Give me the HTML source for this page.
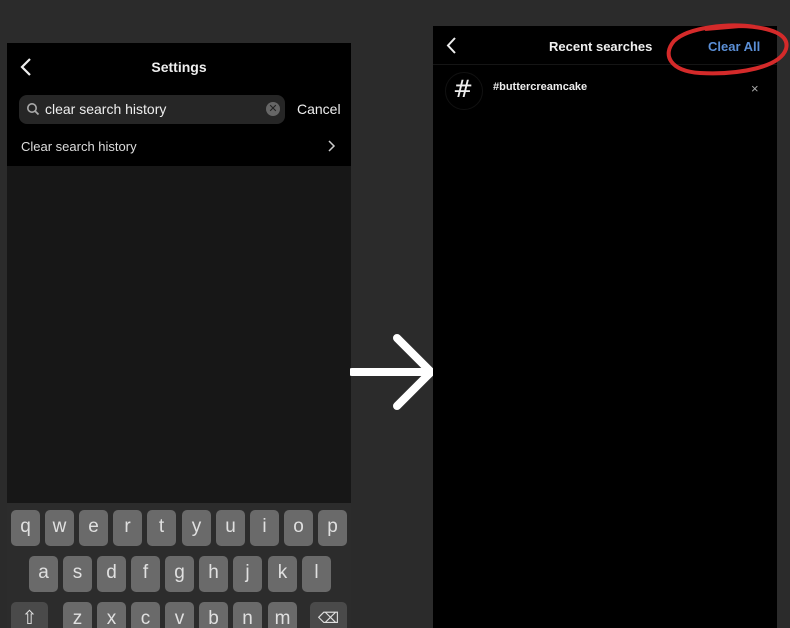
<!DOCTYPE html><html><head><style>
html,body{margin:0;width:790px;height:628px;overflow:hidden}
body{background:#2b2b2b;position:relative;font-family:"Liberation Sans",sans-serif;color:#eee}
.a{position:absolute}
.k{position:absolute;width:29px;height:36px;background:#6a6a6a;border-radius:5px;color:#e0e0e0;font-size:19px;text-align:center;line-height:34px}
</style></head><body>
<div class="a" style="left:7px;top:43px;width:344px;height:585px;background:#171717"></div>
<div class="a" style="left:7px;top:43px;width:344px;height:123px;background:#000"></div>
<svg class="a" style="left:18px;top:56px" width="16" height="22"><path d="M12 3 L4 11 L12 19" stroke="#eee" stroke-width="2.2" fill="none"/></svg>
<div class="a" style="left:7px;width:344px;top:59px;text-align:center;font-weight:bold;font-size:14px">Settings</div>
<div class="a" style="left:19px;top:95px;width:266px;height:29px;background:#262626;border-radius:8px"></div>
<svg class="a" style="left:26px;top:102px" width="14" height="14"><circle cx="6" cy="6" r="4.2" stroke="#aaa" stroke-width="1.6" fill="none"/><path d="M9 9 L12.5 12.5" stroke="#aaa" stroke-width="1.8"/></svg>
<div class="a" style="left:45px;top:101px;font-size:14px">clear search history</div>
<div class="a" style="left:266px;top:102px;width:14px;height:14px;border-radius:50%;background:#666;color:#222;font-size:11px;line-height:14px;text-align:center">✕</div>
<div class="a" style="left:297px;top:101px;font-size:14px">Cancel</div>
<div class="a" style="left:21px;top:139px;font-size:13px;color:#ddd">Clear search history</div>
<svg class="a" style="left:326px;top:139px" width="10" height="14"><path d="M3 2 L8 7 L3 12" stroke="#ccc" stroke-width="1.5" fill="none"/></svg>
<div class="a" style="left:7px;top:503px;width:344px;height:125px;background:#2c2c2c"></div>
<div class="k" style="left:11px;top:510px">q</div><div class="k" style="left:45px;top:510px">w</div><div class="k" style="left:79px;top:510px">e</div><div class="k" style="left:113px;top:510px">r</div><div class="k" style="left:147px;top:510px">t</div><div class="k" style="left:182px;top:510px">y</div><div class="k" style="left:216px;top:510px">u</div><div class="k" style="left:250px;top:510px">i</div><div class="k" style="left:284px;top:510px">o</div><div class="k" style="left:318px;top:510px">p</div>
<div class="k" style="left:29px;top:556px">a</div><div class="k" style="left:63px;top:556px">s</div><div class="k" style="left:97px;top:556px">d</div><div class="k" style="left:131px;top:556px">f</div><div class="k" style="left:165px;top:556px">g</div><div class="k" style="left:199px;top:556px">h</div><div class="k" style="left:233px;top:556px">j</div><div class="k" style="left:268px;top:556px">k</div><div class="k" style="left:302px;top:556px">l</div>
<div class="k" style="left:11px;top:602px;width:37px;background:#4a4a4a">⇧</div>
<div class="k" style="left:63px;top:602px">z</div><div class="k" style="left:97px;top:602px">x</div><div class="k" style="left:131px;top:602px">c</div><div class="k" style="left:165px;top:602px">v</div><div class="k" style="left:199px;top:602px">b</div><div class="k" style="left:233px;top:602px">n</div><div class="k" style="left:268px;top:602px">m</div>
<div class="k" style="left:310px;top:602px;width:37px;background:#4a4a4a;font-size:15px">⌫</div>
<svg class="a" style="left:350px;top:330px" width="90" height="85"><path d="M2 42 L80 42 M47 8 L81 42 L47 76" stroke="#fff" stroke-width="8" fill="none" stroke-linecap="round" stroke-linejoin="round"/></svg>
<div class="a" style="left:433px;top:26px;width:344px;height:602px;background:#000"></div>
<div class="a" style="left:433px;top:64px;width:344px;height:1px;background:#151515"></div>
<svg class="a" style="left:444px;top:36px" width="16" height="20"><path d="M11 2 L4 9.5 L11 17" stroke="#eee" stroke-width="2" fill="none"/></svg>
<div class="a" style="left:549px;top:39px;font-weight:bold;font-size:13px">Recent searches</div>
<div class="a" style="left:708px;top:39px;font-weight:bold;font-size:13px;color:#5b8fd6">Clear All</div>
<svg class="a" style="left:660px;top:15px" width="130" height="65"><path d="M95 12 C70 8 28 12 14 26 C2 40 10 56 40 58 C80 60 120 52 126 34 C130 20 112 12 80 11 L45 14" stroke="#d42a2a" stroke-width="4" fill="none"/></svg>
<div class="a" style="left:445px;top:72px;width:36px;height:36px;border-radius:50%;border:1px solid #111"></div>
<div class="a" style="left:450px;top:75px;font-size:24px;width:26px;text-align:center;font-family:'DejaVu Sans',sans-serif">#</div>
<div class="a" style="left:493px;top:81px;font-weight:bold;font-size:11px">#buttercreamcake</div>
<div class="a" style="left:751px;top:81px;font-size:13px;color:#aaa">×</div>
</body></html>
